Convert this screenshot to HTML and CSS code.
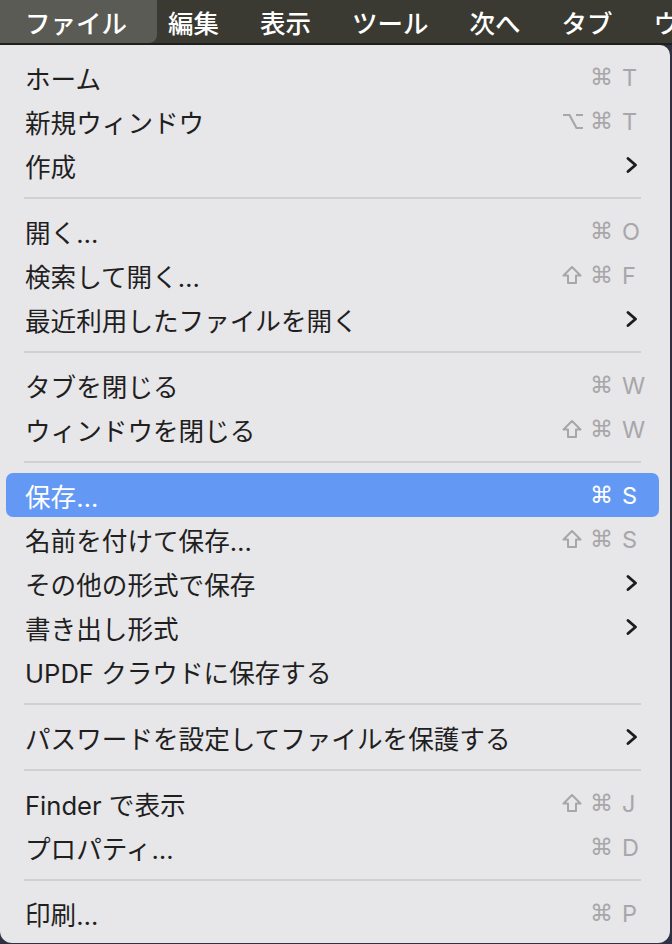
FILE: index.html
```html
<!DOCTYPE html>
<html lang="ja">
<head>
<meta charset="utf-8">
<link rel="stylesheet" href="styles.css">
</head>
<body>
<div class="menubar">
  <div class="mb-item mb-active">ファイル</div>
  <div class="mb-item">編集</div>
  <div class="mb-item">表示</div>
  <div class="mb-item">ツール</div>
  <div class="mb-item">次へ</div>
  <div class="mb-item">タブ</div>
  <div class="mb-item">ウィンドウ</div>
</div>
<div class="stage">
  <div class="menu">
    <div class="row"><span class="label">ホーム</span><span class="sc"><span class="mods">⌘</span><span class="key">T</span></span></div>
    <div class="row"><span class="label">新規ウィンドウ</span><span class="sc"><span class="mods"><svg class="opt" viewBox="0 0 22 20" width="22" height="20" aria-label="⌥"><path d="M1 4 H7.5 L14.5 17 H21 M14 4 H21"/></svg>⌘</span><span class="key">T</span></span></div>
    <div class="row"><span class="label">作成</span><span class="sc"><span class="key"><svg class="chev" viewBox="0 0 14 18" width="14" height="18"><path d="M3 2.5 L10.5 9 L3 15.5"/></svg></span></span></div>
    <div class="sep"></div>
    <div class="row"><span class="label">開く…</span><span class="sc"><span class="mods">⌘</span><span class="key">O</span></span></div>
    <div class="row"><span class="label">検索して開く…</span><span class="sc"><span class="mods"><svg class="shift" viewBox="0 0 20 20" width="20" height="20" aria-label="⇧"><path d="M10 2 L18.5 10.5 H14 V18 H6 V10.5 H1.5 Z"/></svg>⌘</span><span class="key">F</span></span></div>
    <div class="row"><span class="label">最近利用したファイルを開く</span><span class="sc"><span class="key"><svg class="chev" viewBox="0 0 14 18" width="14" height="18"><path d="M3 2.5 L10.5 9 L3 15.5"/></svg></span></span></div>
    <div class="sep"></div>
    <div class="row"><span class="label">タブを閉じる</span><span class="sc"><span class="mods">⌘</span><span class="key">W</span></span></div>
    <div class="row"><span class="label">ウィンドウを閉じる</span><span class="sc"><span class="mods"><svg class="shift" viewBox="0 0 20 20" width="20" height="20" aria-label="⇧"><path d="M10 2 L18.5 10.5 H14 V18 H6 V10.5 H1.5 Z"/></svg>⌘</span><span class="key">W</span></span></div>
    <div class="sep"></div>
    <div class="row row-active"><span class="label">保存…</span><span class="sc"><span class="mods">⌘</span><span class="key">S</span></span></div>
    <div class="row"><span class="label">名前を付けて保存…</span><span class="sc"><span class="mods"><svg class="shift" viewBox="0 0 20 20" width="20" height="20" aria-label="⇧"><path d="M10 2 L18.5 10.5 H14 V18 H6 V10.5 H1.5 Z"/></svg>⌘</span><span class="key">S</span></span></div>
    <div class="row"><span class="label">その他の形式で保存</span><span class="sc"><span class="key"><svg class="chev" viewBox="0 0 14 18" width="14" height="18"><path d="M3 2.5 L10.5 9 L3 15.5"/></svg></span></span></div>
    <div class="row"><span class="label">書き出し形式</span><span class="sc"><span class="key"><svg class="chev" viewBox="0 0 14 18" width="14" height="18"><path d="M3 2.5 L10.5 9 L3 15.5"/></svg></span></span></div>
    <div class="row"><span class="label">UPDF クラウドに保存する</span></div>
    <div class="sep"></div>
    <div class="row"><span class="label">パスワードを設定してファイルを保護する</span><span class="sc"><span class="key"><svg class="chev" viewBox="0 0 14 18" width="14" height="18"><path d="M3 2.5 L10.5 9 L3 15.5"/></svg></span></span></div>
    <div class="sep"></div>
    <div class="row"><span class="label">Finder で表示</span><span class="sc"><span class="mods"><svg class="shift" viewBox="0 0 20 20" width="20" height="20" aria-label="⇧"><path d="M10 2 L18.5 10.5 H14 V18 H6 V10.5 H1.5 Z"/></svg>⌘</span><span class="key">J</span></span></div>
    <div class="row"><span class="label">プロパティ…</span><span class="sc"><span class="mods">⌘</span><span class="key">D</span></span></div>
    <div class="sep"></div>
    <div class="row"><span class="label">印刷…</span><span class="sc"><span class="mods">⌘</span><span class="key">P</span></span></div>
  </div>
</div>
</body>
</html>
```

FILE: styles.css
```css
html, body {
  margin: 0;
  padding: 0;
}
body {
  width: 672px;
  height: 944px;
  overflow: hidden;
  background: #2f3142;
  font-family: "Inter", "Noto Sans CJK JP", sans-serif;
}
.menubar {
  display: flex;
  align-items: stretch;
  height: 43px;
  background: #3a3a32;
  border-bottom: 2px solid #1f1f1b;
  color: #ffffff;
  font-size: 25.5px;
  white-space: nowrap;
  overflow: hidden;
}
.mb-item {
  flex-shrink: 0;
  display: flex;
  align-items: center;
  margin-right: 41px;
  font-weight: 500;
}
.mb-active {
  width: 157px;
  box-sizing: border-box;
  padding-left: 25px;
  margin-right: 11px;
  background: #5a5b54;
  border-bottom-right-radius: 8px;
}
.stage {
  display: flex;
}
.menu {
  width: 670px;
  box-sizing: border-box;
  padding: 10px 11px 8px 6px;
  background: #e7e6e9;
  border-radius: 0 10px 12px 12px;
  color: #1f1f1f;
  font-size: 25.6px;
}
.row {
  display: flex;
  align-items: center;
  height: 44px;
  padding: 0 15px 0 19px;
  border-radius: 7px;
}
.label {
  flex: 1;
  white-space: nowrap;
}
.sc {
  display: flex;
  align-items: center;
  color: #a7a7a9;
  font-size: 23.5px;
}
.mods {
  font-family: "DejaVu Sans", sans-serif;
  font-size: 23px;
  display: flex;
  align-items: center;
}
.shift, .opt {
  margin-right: 8px;
  fill: none;
  stroke: currentColor;
  stroke-width: 2;
  stroke-linejoin: round;
}
.opt {
  stroke-width: 2.2;
  stroke-linejoin: miter;
  margin-right: 6px;
}
.key {
  width: 22px;
  margin-left: 9px;
  display: flex;
  align-items: center;
}
.chev {
  margin-left: 3px;
  fill: none;
  stroke: #1c1c1c;
  stroke-width: 2.9;
  stroke-linecap: round;
  stroke-linejoin: round;
}
.row-active {
  background: #6399f5;
  color: #ffffff;
}
.row-active .sc {
  color: #ffffff;
}
.sep {
  height: 2px;
  margin: 10px 18px 10px 18px;
  background: #d0cfd2;
}
```
